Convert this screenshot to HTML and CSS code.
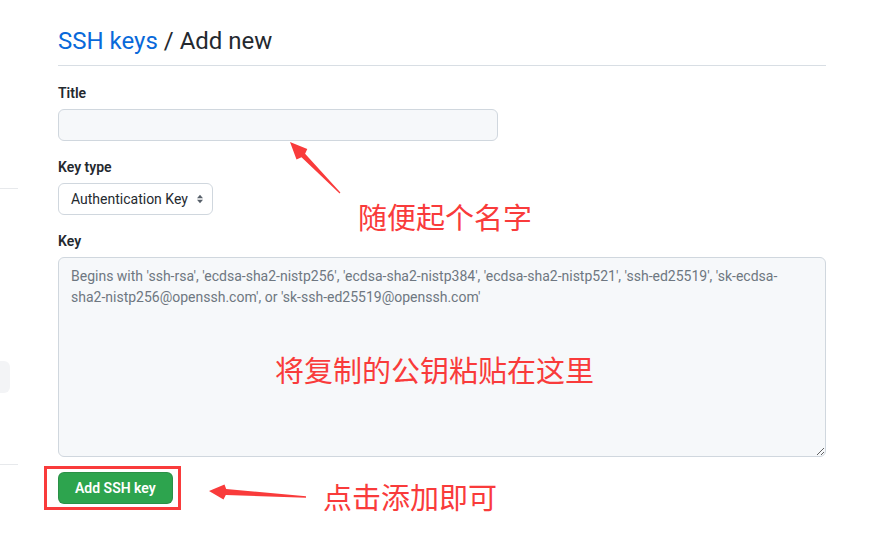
FILE: index.html
```html
<!DOCTYPE html>
<html lang="zh-CN">
<head>
<meta charset="utf-8">
<title>SSH keys / Add new</title>
<link rel="stylesheet" href="styles.css">
</head>
<body>
<div class="page">
  <aside class="sidebar">
    <div class="side-rule side-rule-top"></div>
    <div class="side-item"></div>
    <div class="side-rule side-rule-bottom"></div>
  </aside>
  <main class="main">
    <h2 class="subhead"><a class="crumb" href="#">SSH keys</a> / Add new</h2>
    <form class="form">
      <div class="group">
        <label class="label" for="title">Title</label>
        <input id="title" class="control title-input" type="text">
      </div>
      <div class="group">
        <label class="label">Key type</label>
        <div class="select">
          <span class="select-text">Authentication Key</span>
          <svg class="select-caret" width="8" height="10" viewBox="0 0 8 10"><path d="M1 4.2 L4 0.8 L7 4.2 Z M1 5.8 L4 9.2 L7 5.8 Z" fill="#57606a"/></svg>
        </div>
      </div>
      <div class="group">
        <label class="label" for="key">Key</label>
        <textarea id="key" class="control key-area" placeholder="Begins with 'ssh-rsa', 'ecdsa-sha2-nistp256', 'ecdsa-sha2-nistp384', 'ecdsa-sha2-nistp521', 'ssh-ed25519', 'sk-ecdsa-&#10;sha2-nistp256@openssh.com', or 'sk-ssh-ed25519@openssh.com'"></textarea>
      </div>
      <button class="btn" type="button">Add SSH key</button>
    </form>
  </main>
</div>

<div class="mark-box"></div>
<svg class="arrows" width="890" height="544" viewBox="0 0 890 544">
  <polygon fill="#f93b3b" points="290,142 307.3,148.9 305.1,153.7 340.4,192.6 339.6,193.4 301.5,157.3 296.5,159.4"/>
  <polygon fill="#f93b3b" points="209,491 224.5,484.4 226.2,489 306,496.3 306,497.7 225.8,495 223.5,499.4"/>
</svg>
<div class="note note-title">随便起个名字</div>
<div class="note note-key">将复制的公钥粘贴在这里</div>
<div class="note note-add">点击添加即可</div>
</body>
</html>
```
FILE: styles.css
```css
* { box-sizing: border-box; }
html, body {
  margin: 0;
  padding: 0;
  background: #ffffff;
}
body {
  width: 890px;
  height: 544px;
  overflow: hidden;
  position: relative;
  font-family: Roboto, "Noto Sans", "Liberation Sans", sans-serif;
  color: #24292f;
  font-size: 14px;
}
.page {
  display: flex;
  align-items: flex-start;
}
.sidebar {
  width: 18px;
  flex: none;
  display: flex;
  flex-direction: column;
  overflow: hidden;
}
.side-rule {
  height: 1px;
  width: 18px;
  background: #e7e9ec;
}
.side-rule-top { margin-top: 188px; }
.side-item {
  margin-top: 172px;
  width: 10px;
  height: 32px;
  background: #f3f4f6;
  border-radius: 0 6px 6px 0;
}
.side-rule-bottom { margin-top: 71px; }

.main {
  margin-left: 40px;
  width: 768px;
  padding-top: 23px;
}
.subhead {
  margin: 0;
  font-size: 24px;
  font-weight: 400;
  line-height: 36px;
  padding-bottom: 6px;
  border-bottom: 1px solid #d8dee4;
  color: #24292f;
}
.crumb {
  color: #0969da;
  text-decoration: none;
}
.form {
  margin-top: 17px;
}
.group {
  margin-bottom: 16px;
}
.label {
  display: block;
  font-weight: 600;
  font-size: 14px;
  line-height: 20px;
  margin-bottom: 6px;
  color: #24292f;
}
.control {
  display: block;
  background: #f6f8fa;
  border: 1px solid #d0d7de;
  border-radius: 6px;
  font-family: inherit;
  font-size: 14px;
  color: #24292f;
  outline: none;
}
.title-input {
  width: 440px;
  height: 32px;
  padding: 5px 12px;
}
.select {
  display: inline-flex;
  align-items: center;
  height: 32px;
  width: 155px;
  padding: 0 8px 0 12px;
  border: 1px solid #d0d7de;
  border-radius: 6px;
  background: #ffffff;
  justify-content: space-between;
}
.select-text {
  font-size: 14px;
  line-height: 20px;
  color: #24292f;
  white-space: nowrap;
}
.select-caret { flex: none; }
.key-area {
  width: 768px;
  height: 200px;
  padding: 8px 12px;
  line-height: 21px;
  resize: vertical;
}
.key-area::placeholder {
  color: #6e7781;
  opacity: 1;
}
.btn {
  display: block;
  margin-top: -1px;
  height: 32px;
  padding: 0 16px;
  border: 1px solid rgba(27,31,36,0.15);
  border-radius: 6px;
  background: #2da44e;
  color: #ffffff;
  font-family: inherit;
  font-size: 14px;
  font-weight: 600;
  line-height: 20px;
  white-space: nowrap;
}

.mark-box {
  position: absolute;
  left: 44px;
  top: 466px;
  width: 137px;
  height: 44px;
  border: 3px solid #f93b3b;
}
.arrows {
  position: absolute;
  left: 0;
  top: 0;
  pointer-events: none;
}
.note {
  position: absolute;
  font-family: "Noto Sans CJK SC", sans-serif;
  font-size: 29px;
  line-height: 29px;
  color: #f93b3b;
  white-space: nowrap;
}
.note-title { left: 358px; top: 202px; }
.note-key { left: 275px; top: 355px; }
.note-add { left: 323px; top: 482px; }
```
